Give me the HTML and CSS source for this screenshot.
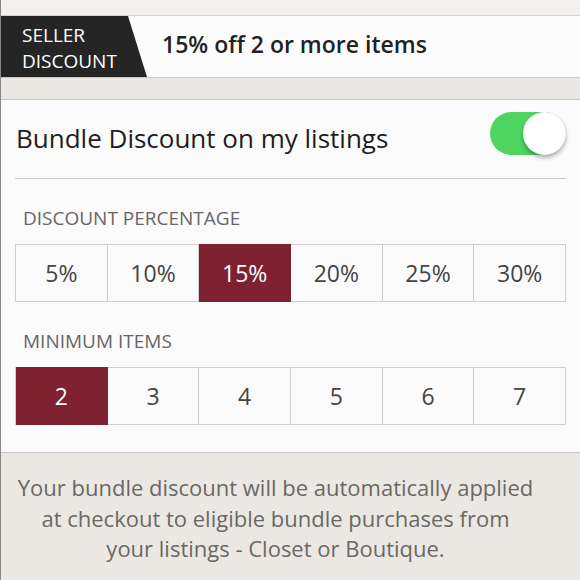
FILE: index.html
```html
<!DOCTYPE html>
<html>
<head>
<meta name="viewport" content="width=device-width, initial-scale=1">
<link rel="stylesheet" href="styles.css">
</head>
<body>

<div class="page">
  <div class="strip"></div>

  <div class="seller">
    <div class="tag">SELLER<br>DISCOUNT</div>
    <div class="summary">15% off 2 or more items</div>
  </div>

  <div class="gap"></div>

  <div class="panel">
    <div class="head">
      <span class="title">Bundle Discount on my listings</span>
      <span class="switch on"><span class="knob"></span></span>
    </div>

    <div class="label">DISCOUNT PERCENTAGE</div>
    <div class="choices">
      <div class="cell">5%</div>
      <div class="cell">10%</div>
      <div class="cell active">15%</div>
      <div class="cell">20%</div>
      <div class="cell">25%</div>
      <div class="cell">30%</div>
    </div>

    <div class="label">MINIMUM ITEMS</div>
    <div class="choices">
      <div class="cell active">2</div>
      <div class="cell">3</div>
      <div class="cell">4</div>
      <div class="cell">5</div>
      <div class="cell">6</div>
      <div class="cell">7</div>
    </div>
  </div>

  <div class="note">
    Your bundle discount will be automatically applied<br>
    at checkout to eligible bundle purchases from<br>
    your listings - Closet or Boutique.
  </div>
</div>

</body>
</html>
```

FILE: styles.css
```css
body {
    margin: 0;
    font-family: "Open Sans", Lato, sans-serif;
    background-color: #ebe8e3;
}

.page {
    width: 580px;
    height: 580px;
    overflow: hidden;
    border-left: 1px solid #8a8886;
    box-sizing: border-box;
    background-color: #ebe8e3;
}

.strip {
    height: 15px;
    background-color: #f3f1ee;
    border-bottom: 1px solid #d3d1ce;
}

/* Seller discount bar */
.seller {
    height: 61px;
    display: flex;
    align-items: center;
    background-color: #fdfcfc;
    border-bottom: 1px solid #c9c7c4;
}

.tag {
    width: 146px;
    height: 100%;
    box-sizing: border-box;
    padding: 6px 0 0 21px;
    background-color: #252525;
    color: #fff;
    font-size: 19px;
    line-height: 26px;
    clip-path: polygon(0 0, 127px 0, 146px 100%, 0 100%);
}

.summary {
    margin: 0 0 5px 15px;
    font-size: 23px;
    font-weight: 600;
    color: #222;
}

.gap {
    height: 21px;
    border-bottom: 1px solid #c8c6c3;
}

/* Main panel */
.panel {
    background-color: #fcfbfb;
    padding: 0 14px 27px 14px;
    border-bottom: 1px solid #c8c6c3;
}

.head {
    height: 79px;
    box-sizing: border-box;
    padding: 0 0 3px 1px;
    display: flex;
    align-items: center;
    justify-content: space-between;
    border-bottom: 1px solid #cdcbca;
}

.title {
    font-size: 26px;
    color: #1e1e1e;
}

.switch {
    align-self: flex-start;
    margin-top: 12px;
    width: 76px;
    height: 43px;
    border-radius: 22px;
    background-color: #4ed460;
    position: relative;
}

.switch .knob {
    position: absolute;
    right: 0;
    top: 0;
    width: 43px;
    height: 43px;
    border-radius: 50%;
    background-color: #fff;
    box-shadow: 0 3px 4px rgba(0,0,0,0.3);
}

.label {
    padding: 26px 0 13px 8px;
    font-size: 19px;
    line-height: 26px;
    color: #666;
}

.choices {
    display: grid;
    grid-template-columns: repeat(6, 1fr);
    border-left: 1px solid #cfcdcd;
}

.cell {
    height: 56px;
    display: flex;
    align-items: center;
    justify-content: center;
    border: 1px solid #cfcdcd;
    border-left: none;
    font-size: 23px;
    color: #444;
}

.cell.active {
    background-color: #7e2231;
    border-color: #7e2231;
    color: #fff;
}

/* Footer text */
.note {
    padding: 19px 30px 0 0;
    text-align: center;
    font-size: 22px;
    line-height: 30.5px;
    color: #6a6866;
}
```
